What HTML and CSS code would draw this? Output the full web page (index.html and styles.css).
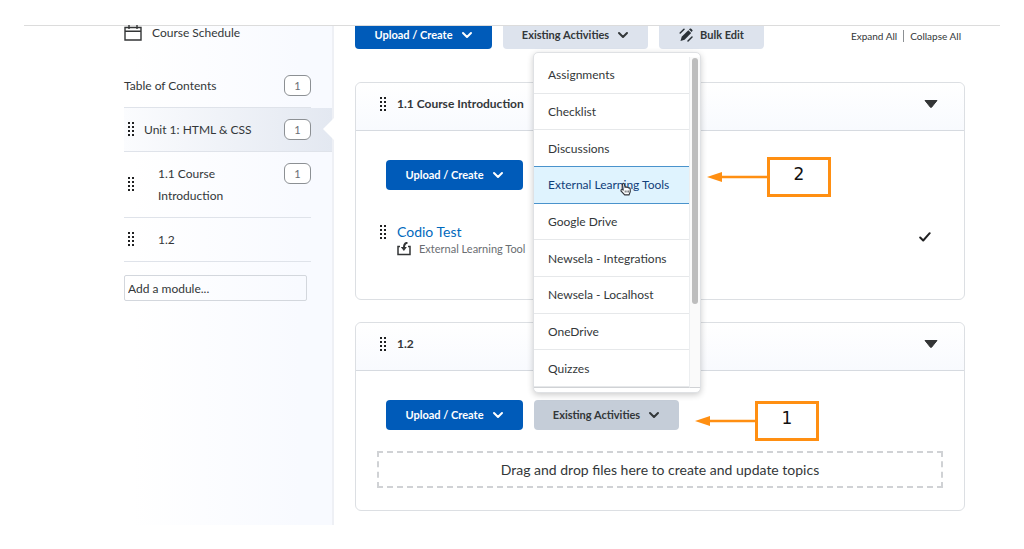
FILE: index.html
```html
<!DOCTYPE html>
<html lang="en">
<head>
<meta charset="utf-8">
<meta name="viewport" content="width=device-width, initial-scale=1">
<title>Unit 1: HTML &amp; CSS</title>
<link rel="stylesheet" href="styles.css">
</head>
<body>
<svg width="0" height="0" class="defs" aria-hidden="true">
  <symbol id="grip" viewBox="0 0 6 14">
    <path d="M0 0h2v2H0zM4 0h2v2H4zM0 4h2v2H0zM4 4h2v2H4zM0 8h2v2H0zM4 8h2v2H4zM0 12h2v2H0zM4 12h2v2H4z" fill="#202122"/>
  </symbol>
  <symbol id="chevron" viewBox="0 0 12 8">
    <path d="M2 2l4 4 4-4" fill="none" stroke="currentColor" stroke-width="2" stroke-linecap="round" stroke-linejoin="round"/>
  </symbol>
  <symbol id="caret" viewBox="0 0 14 8">
    <path d="M1 .5h12L7.6 7.2q-.6.6-1.2 0z" fill="#333536" stroke="#333536"/>
  </symbol>
  <symbol id="arrow" viewBox="0 0 60 12">
    <path d="M13 6h47" stroke="#ff8f12" stroke-width="2.4"/>
    <path d="M0 6l15-5v10z" fill="#ff8f12"/>
  </symbol>
</svg>
<div class="page">
  <header class="topbar"></header>
  <div class="app">
    <nav class="sidebar" aria-label="Table of contents">
      <a class="schedule" href="#schedule">
        <svg width="18" height="16" viewBox="0 0 18 16" fill="none" stroke="#333536" stroke-width="1.4"><path d="M1 2.5h16v12.5H1zM1 6.3h16M5 0v4M13 0v4"/></svg>
        Course Schedule
      </a>
      <a class="row toc" href="#toc"><span>Table of Contents</span><span class="count">1</span></a>
      <ul class="modules">
        <li><a class="row active" href="#unit1"><svg class="grip"><use href="#grip"/></svg><span class="unit-name">Unit 1: HTML &amp; CSS</span><span class="count">1</span></a></li>
        <li><a class="row child" href="#m11"><svg class="grip"><use href="#grip"/></svg><span class="name">1.1 Course Introduction</span><span class="count">1</span></a></li>
        <li><a class="row child" href="#m12"><svg class="grip"><use href="#grip"/></svg><span class="name">1.2</span></a></li>
      </ul>
      <input class="add-module" type="text" placeholder="Add a module..." aria-label="Add a module">
    </nav>
    <main class="content">
      <div class="toolbar">
        <button class="btn primary clipped">Upload / Create <svg class="chevron"><use href="#chevron"/></svg></button>
        <div class="dropdown">
          <button class="btn secondary clipped" aria-expanded="true">Existing Activities <svg class="chevron"><use href="#chevron"/></svg></button>
          <div class="menu">
            <ul class="menu-list">
              <li><button>Assignments</button></li>
              <li><button>Checklist</button></li>
              <li><button>Discussions</button></li>
              <li class="hovered"><button>External Learning Tools</button>
                <svg class="pointer" width="12" height="14" viewBox="0 0 12 14"><path d="M3.2 8L2.5 2Q3.3.4 4.3 2l.8 3.2q1-.8 1.8.2 1-.5 1.7.5 1.3-.3 1.6 1l.1 2.8-1.3 3.2H4.7L1 8.9Q.8 7.4 2 7.6z" fill="#fff" stroke="#30343a" stroke-width="1.1"/><path d="M5.2 8.5v2M7 8.5v2M8.7 8.5v2" stroke="#30343a" stroke-width=".8"/></svg>
              </li>
              <li><button>Google Drive</button></li>
              <li><button>Newsela - Integrations</button></li>
              <li><button>Newsela - Localhost</button></li>
              <li><button>OneDrive</button></li>
              <li><button>Quizzes</button></li>
            </ul>
            <div class="track"><div class="thumb"></div></div>
          </div>
        </div>
        <button class="btn secondary clipped bulk">
          <svg width="14" height="14" viewBox="0 0 14 14"><path d="M1.5 13l1.2-4.2 6.6-6.6 2.9 2.9-6.6 6.6z" fill="#293036"/><path d="M10 1.5l1-.9q.6-.4 1.2.1l1.2 1.2q.5.6 0 1.2l-.8.8z" fill="#293036"/><path d="M1.2 5L5 1.2M9 13l4-4" stroke="#293036" stroke-width="1.5" stroke-linecap="round"/></svg>
          Bulk Edit</button>
        <div class="view-links"><a href="#expand">Expand All</a><a href="#collapse">Collapse All</a></div>
      </div>

      <section class="panel intro">
        <header class="panel-head"><svg class="grip"><use href="#grip"/></svg><h2>1.1 Course Introduction</h2><button class="toggle" aria-label="Collapse 1.1 Course Introduction"><svg width="14" height="8"><use href="#caret"/></svg></button></header>
        <div class="actions">
          <button class="btn primary">Upload / Create <svg class="chevron"><use href="#chevron"/></svg></button>
        </div>
        <div class="topic">
          <svg class="grip"><use href="#grip"/></svg>
          <div class="topic-text">
            <a href="#codio">Codio Test</a>
            <p><svg width="14" height="14" viewBox="0 0 14 14" fill="none" stroke="#333536" stroke-width="1.5"><path d="M3 4.5H1v8h12v-8h-2"/><path d="M10.5.8Q7.2 1 7 5" stroke-width="2"/><path d="M3.8 5h6L6.9 9z" fill="#333536" stroke="none"/></svg>External Learning Tool</p>
          </div>
          <svg class="check" width="12" height="10" viewBox="0 0 12 10"><path d="M1.2 5.5l3 3 6.5-7.3" fill="none" stroke="#202122" stroke-width="2" stroke-linecap="round" stroke-linejoin="round"/></svg>
        </div>
        <div class="callout second"><svg width="60" height="12"><use href="#arrow"/></svg><span>2</span></div>
      </section>

      <section class="panel">
        <header class="panel-head"><svg class="grip"><use href="#grip"/></svg><h2>1.2</h2><button class="toggle" aria-label="Collapse 1.2"><svg width="14" height="8"><use href="#caret"/></svg></button></header>
        <div class="actions">
          <button class="btn primary">Upload / Create <svg class="chevron"><use href="#chevron"/></svg></button>
          <button class="btn pressed">Existing Activities <svg class="chevron"><use href="#chevron"/></svg></button>
        </div>
        <div class="dropzone">Drag and drop files here to create and update topics</div>
        <div class="callout first"><svg width="60" height="12"><use href="#arrow"/></svg><span>1</span></div>
      </section>
    </main>
  </div>
</div>
</body>
</html>
```
FILE: styles.css
```css
* { box-sizing: border-box; }
body {
  margin: 0;
  background: #fff;
  color: #333739;
  font: 12px/22px Lato, "Liberation Sans", sans-serif;
}
.defs { position: absolute; }
svg { flex: none; }
a { color: inherit; text-decoration: none; }
ul { list-style: none; margin: 0; padding: 0; }
button, input { font: inherit; color: inherit; }
.page { padding: 0 24px 24px; }
.topbar { height: 26px; border-bottom: 1px solid #dcdcdc; }
.app { display: flex; }
.grip { width: 6px; height: 14px; }
.chevron { width: 12px; height: 8px; }

.sidebar {
  flex: 0 0 310px;
  padding-left: 100px;
  border-right: 2px solid #eef0f5;
  background: linear-gradient(to right, #fff 35%, #f8faff 90%);
}
.schedule { display: flex; align-items: center; gap: 10px; height: 14px; }
.row {
  display: flex;
  align-items: flex-start;
  margin-right: 21px;
  padding: 11px 0 10px;
  border-bottom: 1px solid #dfe3ea;
}
.toc { margin-top: 24px; }
.count {
  width: 27px;
  height: 21px;
  margin-left: auto;
  border: 1px solid #8c9094;
  border-radius: 6px;
  background: #fff;
  color: #6a6e72;
  font-size: 11px;
  line-height: 19px;
  text-align: center;
}
.row .grip { align-self: center; margin: 0 0 2px 4px; }
.active {
  position: relative;
  margin-right: 0;
  padding-right: 21px;
  background: linear-gradient(to right, #fbfcfe, #e3e8f1);
}
.active::after {
  content: "";
  position: absolute;
  right: -2px;
  top: 10px;
  border: solid transparent;
  border-width: 11px 11px 11px 0;
  border-right-color: #fff;
}
.unit-name { margin-left: 10px; }
.child .name { width: 90px; margin-left: 24px; }
.add-module {
  display: block;
  width: 183px;
  height: 26px;
  margin-top: 13px;
  padding: 0 3px;
  border: 1px solid #d3d7dd;
  border-radius: 2px;
  background: transparent;
}
.add-module::placeholder { color: #333739; opacity: 1; }

.content { flex: 1; min-width: 0; padding: 0 35px 14px 21px; }
.toolbar { display: flex; align-items: flex-start; gap: 11px; margin-bottom: 33px; }
.btn {
  display: flex;
  align-items: center;
  justify-content: center;
  gap: 8px;
  min-width: 137px;
  height: 30px;
  padding: 0 16px;
  border: 0;
  border-radius: 4px;
  font-size: 11px;
  font-weight: 700;
  line-height: 16px;
  white-space: nowrap;
}
.primary { background: #005bb9; color: #fff; }
.secondary { min-width: 145px; background: #dde3ed; color: #333739; }
.pressed { min-width: 145px; background: #c5cdd8; color: #333739; }
.clipped { height: 23px; padding-bottom: 6px; border-radius: 0 0 4px 4px; }
.bulk { min-width: 105px; gap: 7px; }
.view-links { display: flex; margin: 4px 4px 0 auto; font-size: 10px; line-height: 12px; }
.view-links a + a { margin-left: 6px; padding-left: 6px; border-left: 1px solid #8c9094; }

.dropdown { position: relative; }
.menu {
  position: absolute;
  z-index: 2;
  left: 30px;
  top: 26px;
  display: flex;
  width: 168px;
  padding: 4px 0;
  border: 1px solid #dfe1e4;
  border-radius: 5px;
  background: #fff;
  box-shadow: 0 2px 6px rgba(0, 0, 0, .2);
}
.menu-list {
  flex: 1;
  display: grid;
  grid-auto-rows: 1fr;
  height: 331px;
  border-bottom: 1px solid #d0d2d5;
}
.menu-list li { position: relative; display: flex; border-bottom: 1px solid #e6e8ea; }
.menu-list button { flex: 1; padding: 1px 14px 0; border: 0; background: none; text-align: left; white-space: nowrap; }
.menu-list .hovered { margin-top: -1px; border: solid #4a93cc; border-width: 1px 0; background: #dff3fe; color: #10407a; }
.pointer { position: absolute; left: 86px; top: 15px; }
.track { width: 11px; padding: 1px 2px; border-left: 1px solid #eceef0; border-bottom: 1px solid #d0d2d5; background: #fafafa; }
.thumb { width: 6px; height: 246px; border-radius: 3px; background: #bdbdbd; }

.panel { position: relative; padding-bottom: 22px; border: 1px solid #dcdfe3; border-radius: 6px; }
.intro { min-height: 218px; margin-bottom: 22px; }
.panel-head {
  display: flex;
  align-items: center;
  height: 48px;
  padding: 0 26px 5px 24px;
  border-bottom: 1px solid #d6dae0;
  border-radius: 6px 6px 0 0;
  background: linear-gradient(#fff, #f8fafe);
}
h2 { margin: 0 0 0 11px; font-size: 12px; line-height: 22px; }
.toggle { display: flex; margin-left: auto; padding: 0; border: 0; background: none; }
.actions { display: flex; gap: 11px; padding: 29px 30px 0; }
.topic { display: flex; align-items: flex-start; padding: 33px 33px 0 24px; }
.topic .grip { margin-top: 2px; }
.topic-text { flex: 1; margin-left: 11px; }
.topic-text a { display: block; color: #0069bd; font-size: 14px; line-height: 18px; }
.topic-text p { display: flex; align-items: center; gap: 8px; margin: 0; color: #6a6e72; font-size: 11px; line-height: 16px; }
.check { margin-top: 9px; }
.dropzone {
  margin: 21px 21px 0;
  border: 2px dashed #d0d2d5;
  font-size: 14px;
  line-height: 33px;
  text-align: center;
}
.callout { position: absolute; z-index: 3; display: flex; align-items: center; }
.callout span {
  width: 64px;
  height: 40px;
  border: 3px solid #ff8f12;
  background: #fff;
  color: #111;
  font: 17px/28px "DejaVu Sans", sans-serif;
  text-align: center;
}
.second { left: 351px; top: 74px; }
.first { left: 339px; top: 78px; }
```
